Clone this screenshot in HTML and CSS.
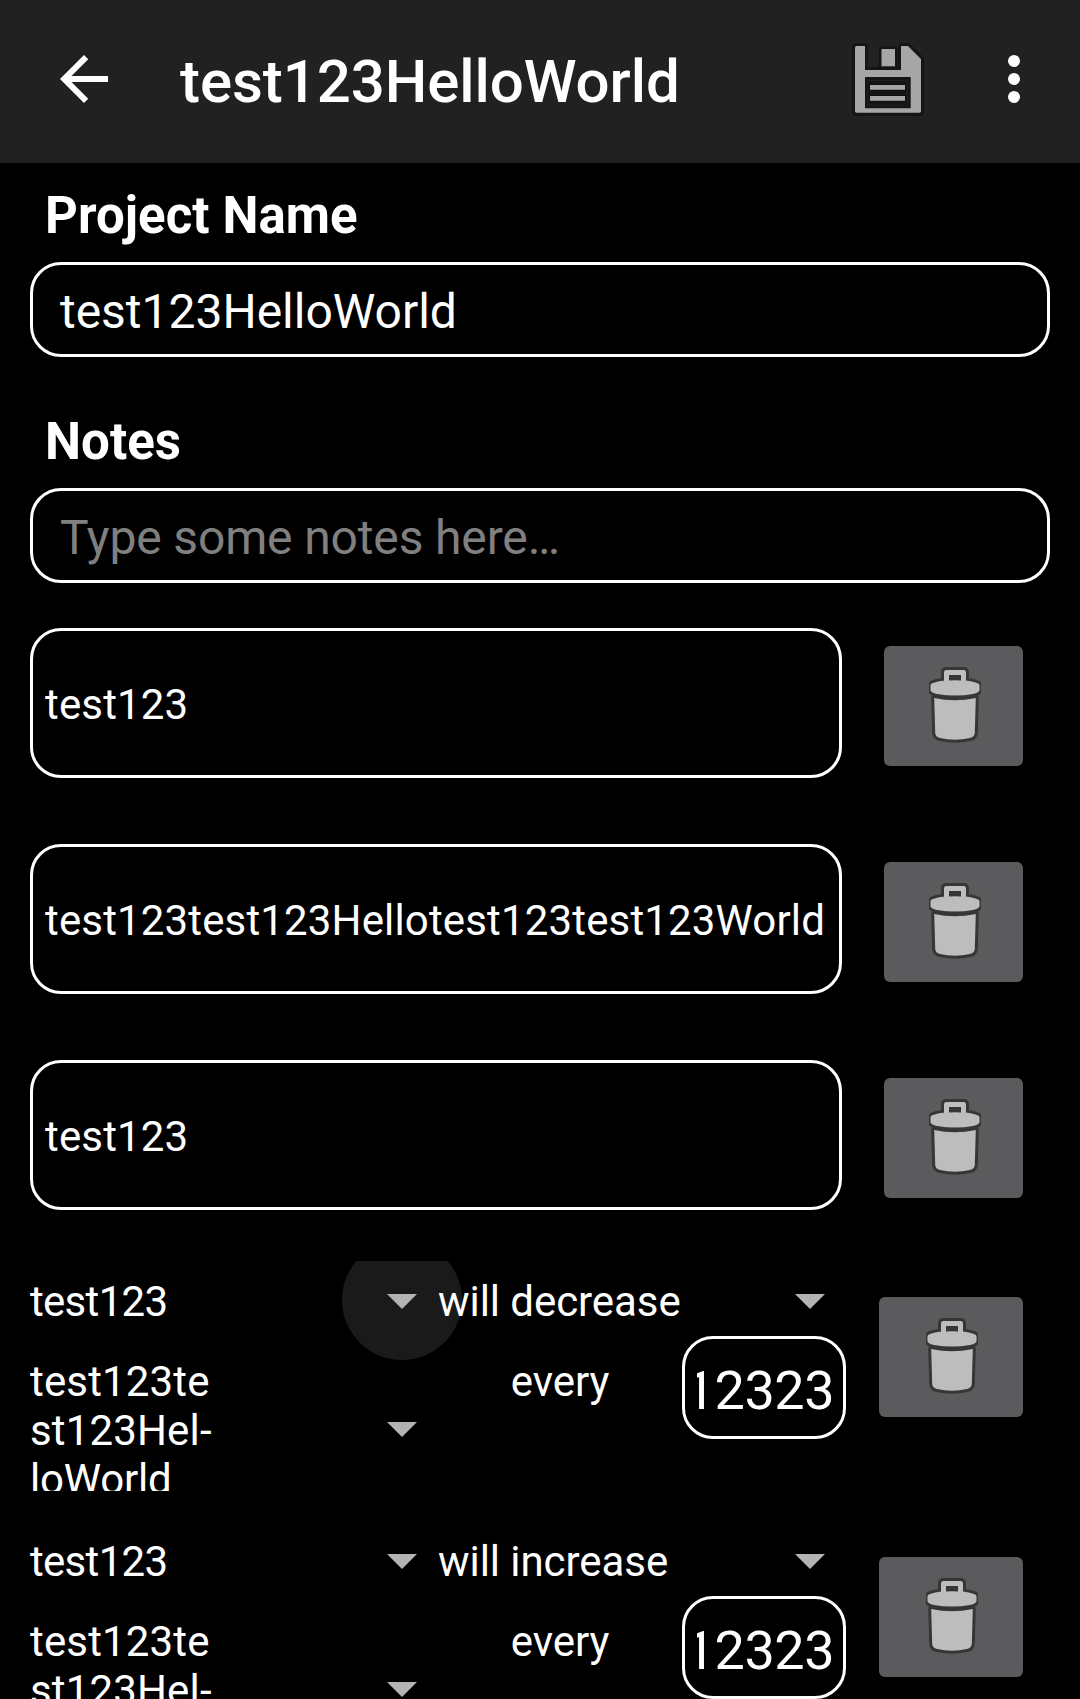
FILE: index.html
```html
<!DOCTYPE html>
<html lang="en">
<head>
<meta charset="utf-8">
<title>test123HelloWorld</title>
<link rel="stylesheet" href="styles.css">
</head>
<body>
<svg class="defs" aria-hidden="true">
  <symbol id="trash" viewBox="0 0 52 78">
    <g stroke-linejoin="round">
      <path d="M5.200 32Q26 36.500 46.800 32L45.800 67Q45.500 71 41 72Q26 75.500 11 72Q6.500 71 6.200 67Z" fill="#bdbdbd" stroke="#363636" stroke-width="6" paint-order="stroke"/>
      <path d="M15 16V6.500Q15 4 17.500 4H34.500Q37 4 37 6.500V14.500Q50.500 16.500 50.500 19V24Q50.500 26.500 44 28Q26 31 8 28Q1.500 26.500 1.500 24V19Q1.500 16.500 15 14.500Z" fill="#bdbdbd" stroke="#363636" stroke-width="6" paint-order="stroke"/>
      <path d="M20 9h12v5.500q-6-.6-12 0z" fill="#363636"/>
    </g>
  </symbol>
  <symbol id="caret" viewBox="0 0 24 24"><path d="M7 10l5 5 5-5z" fill="#b3b3b3"/></symbol>
</svg>

<header class="toolbar">
  <svg class="back" viewBox="0 0 24 24"><path d="M20 11H7.830l5.590-5.590L12 4l-8 8 8 8 1.410-1.410L7.830 13H20v-2z" fill="#fff"/></svg>
  <h1 class="title">test123HelloWorld</h1>
  <svg class="save" viewBox="0 0 72 72">
    <path d="M3 4.500Q3 3 4.500 3H13V27H49V3H56L69 16V68Q69 69.700 67.500 69.700H4.500Q3 69.700 3 68Z" fill="#a6a6a6" stroke="#151515" stroke-width="6" stroke-linejoin="round" paint-order="stroke"/>
    <path d="M29.500 6H43V23.300H29.500Z" fill="#a6a6a6" stroke="#151515" stroke-width="5" stroke-linejoin="round" paint-order="stroke"/>
    <path d="M13 34H58.700V65.200H13Z" fill="#151515"/>
    <path d="M16 37.500H55.500V62H16Z" fill="none" stroke="#1e1e1e"/>
    <path d="M18 42H53V46.700H18ZM18 53H53V57.700H18Z" fill="#a6a6a6" stroke="#101010" stroke-width="2" paint-order="stroke"/>
  </svg>
  <svg class="more" viewBox="0 0 24 24"><g fill="#fff"><circle cx="12" cy="6" r="2"/><circle cx="12" cy="12" r="2"/><circle cx="12" cy="18" r="2"/></g></svg>
</header>

<main class="form">
  <h2 class="label">Project Name</h2>
  <div class="field">test123HelloWorld</div>
  <h2 class="label">Notes</h2>
  <div class="field hint">Type some notes here…</div>

  <section class="items">
    <div class="item"><div class="item-name">test123</div><button class="delete"><svg><use href="#trash"/></svg></button></div>
    <div class="item"><div class="item-name">test123test123Hellotest123test123World</div><button class="delete"><svg><use href="#trash"/></svg></button></div>
    <div class="item"><div class="item-name">test123</div><button class="delete"><svg><use href="#trash"/></svg></button></div>
  </section>

  <section class="rules">
    <div class="rule">
      <div class="column">
        <div class="spinner source"><i class="ripple"></i><span>test123</span><svg class="caret"><use href="#caret"/></svg></div>
        <div class="spinner tall"><span>test123te<br>st123Hel-<br><span class="last">loWorld</span></span><svg class="caret"><use href="#caret"/></svg></div>
      </div>
      <div class="column">
        <div class="spinner"><span>will decrease</span><svg class="caret"><use href="#caret"/></svg></div>
        <div class="period"><span class="every">every</span><div class="number"><div class="digits">12323</div></div></div>
      </div>
      <button class="delete wide"><svg><use href="#trash"/></svg></button>
    </div>
    <div class="rule">
      <div class="column">
        <div class="spinner source"><span>test123</span><svg class="caret"><use href="#caret"/></svg></div>
        <div class="spinner tall"><span>test123te<br>st123Hel-<br><span class="last">loWorld</span></span><svg class="caret"><use href="#caret"/></svg></div>
      </div>
      <div class="column">
        <div class="spinner"><span>will increase</span><svg class="caret"><use href="#caret"/></svg></div>
        <div class="period"><span class="every">every</span><div class="number"><div class="digits">12323</div></div></div>
      </div>
      <button class="delete wide"><svg><use href="#trash"/></svg></button>
    </div>
  </section>
</main>
</body>
</html>
```
FILE: styles.css
```css
* { box-sizing: border-box; }

body {
  margin: 0;
  height: 1699px;
  overflow: hidden;
  background: #000;
  color: #fff;
  font-family: Roboto, sans-serif;
}

.defs { display: none; }

.toolbar {
  display: flex;
  align-items: center;
  height: 163px;
  padding: 0 30px 5px 48px;
  background: #212121;
}

.back, .more { width: 72px; height: 72px; }

.title {
  flex: 1;
  margin: 0 0 0 60px;
  padding-top: 6px;
  font-size: 60px;
  font-weight: 500;
  line-height: 70px;
  letter-spacing: -0.07px;
}

.save { width: 72px; height: 72px; margin-right: 54px; overflow: visible; }

.form { padding: 23px 30px 0; }

.label {
  margin: 0 0 16px 15px;
  font-size: 51px;
  font-weight: 700;
  line-height: 60px;
  letter-spacing: 0.07px;
}

.field {
  display: flex;
  align-items: center;
  height: 95px;
  margin-bottom: 55px;
  padding: 4px 27px 0;
  border: 3px solid #fff;
  border-radius: 31px;
  font-size: 48px;
  line-height: 56px;
  letter-spacing: -0.02px;
}

.hint { margin-bottom: 45px; color: #808080; letter-spacing: -0.14px; }

.items { display: flex; flex-direction: column; gap: 66px; }

.item { display: flex; align-items: flex-start; gap: 42px; }

.item-name {
  display: flex;
  align-items: center;
  width: 812px;
  height: 150px;
  padding: 3px 12px 0;
  border: 3px solid #fff;
  border-radius: 31px;
  font-size: 42px;
  line-height: 49px;
  letter-spacing: 0.15px;
  white-space: nowrap;
}

.delete {
  display: flex;
  justify-content: center;
  width: 139px;
  height: 120px;
  margin: 18px 0 0;
  padding: 20px 0 0 2px;
  border: 0;
  border-radius: 6px;
  background: #5b5b5d;
}

.delete svg { width: 52px; height: 78px; }

.wide { width: 144px; margin: 36px 0 0 33px; padding-left: 1px; }

.rules {
  display: flex;
  flex-direction: column;
  gap: 30px;
  margin-top: 51px;
  font-size: 42px;
  line-height: 49px;
  letter-spacing: -0.06px;
}

.rule { display: flex; align-items: flex-start; height: 230px; }

.column { width: 408px; }

.spinner {
  position: relative;
  display: flex;
  align-items: center;
  justify-content: space-between;
  height: 78px;
}

.spinner span { position: relative; padding-top: 3px; }

.source { letter-spacing: -0.7px; }

.tall {
  align-items: flex-start;
  height: 152px;
  padding-top: 18px;
  overflow: hidden;
  letter-spacing: 0.15px;
}

.tall span { padding-top: 0; }
.tall .caret { margin-top: 35px; }
.last { letter-spacing: -0.2px; }

.caret { position: relative; width: 72px; height: 72px; }

.ripple {
  position: absolute;
  top: -21px;
  left: 312px;
  width: 120px;
  height: 120px;
  border-radius: 50%;
  background: #1a1a1a;
  clip-path: inset(21px 0 0 0);
}

.period { display: flex; align-items: flex-start; }

.every { flex: 1; padding-top: 18px; text-align: center; }

.number {
  width: 164px;
  height: 103px;
  margin-top: -3px;
  padding: 20px 9px 0 12px;
  border: 3px solid #fff;
  border-radius: 31px;
  font-size: 54px;
  line-height: 64px;
  letter-spacing: -0.5px;
}

.digits { display: flex; justify-content: flex-end; overflow: hidden; }
```
